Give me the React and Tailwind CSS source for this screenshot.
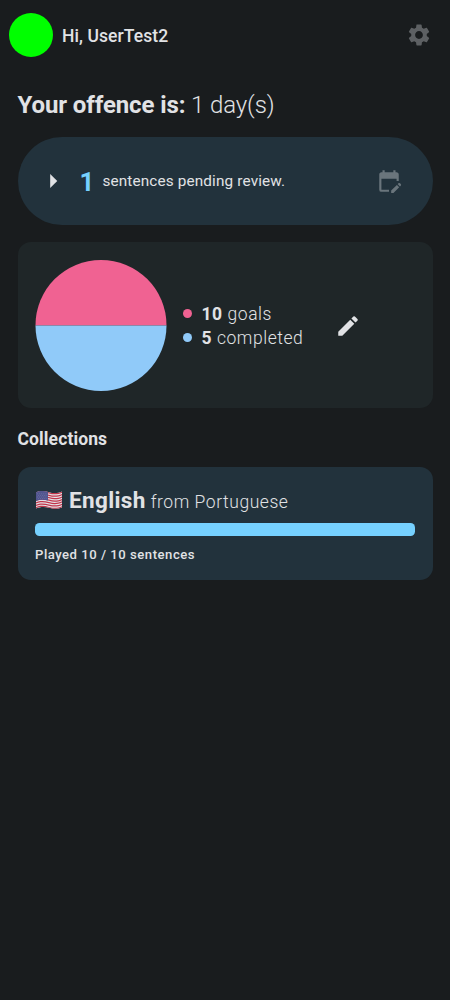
import { MdSettings, MdArrowRight, MdEditCalendar, MdEdit } from "react-icons/md";

const stripes = [0, 1, 2, 3, 4, 5, 6];

function Flag() {
  return (
    <svg viewBox="0 0 26 18" className="h-[18px] w-[26px]" aria-label="United States">
      <defs>
        <clipPath id="wave">
          <path d="M0 1.5C4-.5 8-.2 13 1.2S22 2.2 26 .5V16.5C22 18.2 18 18.2 13 16.8S4 16 0 17.5Z" />
        </clipPath>
      </defs>
      <g clipPath="url(#wave)">
        <path d="M0 0H26V18H0Z" fill="#e4e2e6" />
        {stripes.map((i) => (
          <path
            key={i}
            transform={`translate(0 ${i * 2.46})`}
            d="M0 1.5C4-.5 8-.2 13 1.2S22 2.2 26 .5V1.75C22 3.45 18 3.85 13 2.45S4 .75 0 2.75Z"
            fill="#c2344a"
          />
        ))}
        <path d="M0 0H12V9.6C8 8.4 4 8.1 0 10Z" fill="#51558f" />
        <path d="M1.2 2.8H11M2.2 4.4H11M1.2 6H11M2.2 7.6H11" stroke="#8587b4" strokeWidth=".6" strokeDasharray=".7 1.2" />
      </g>
    </svg>
  );
}

function Legend({ dot, value, label }) {
  return (
    <div className="flex h-6 items-center">
      <span className={`mr-[9.5px] size-[9px] shrink-0 -translate-y-px rounded-full ${dot}`} />
      <p className="whitespace-nowrap text-[17.5px] font-light tracking-[0.55px]">
        <b className="font-bold">{value}</b> {label}
      </p>
    </div>
  );
}

export default function App() {
  return (
    <div className="flex min-h-screen flex-col bg-[#191c1e] font-['Roboto',sans-serif] text-[#e1e2e5]">
      <header className="flex h-[70px] items-center justify-between pl-[9px] pr-[18px]">
        <div className="flex items-center gap-[9px]">
          <span className="size-11 rounded-full bg-[#00ff00]" />
          <span className="pt-[2px] text-[17.5px] font-medium tracking-[0.08px]">Hi, UserTest2</span>
        </div>
        <MdSettings className="size-[26px] text-[#5d6063]" />
      </header>

      <main className="flex flex-col px-[17.5px]">
        <h1 className="flex h-[67px] items-center whitespace-pre pt-[2px] text-[24px] font-light tracking-[-0.11px]">
          <b className="font-bold">Your offence is:</b> 1 day(s)
        </h1>

        <section className="flex h-[87.5px] items-center rounded-full bg-[#22323c] pl-[18px] pr-[31px]">
          <MdArrowRight className="size-[34px]" />
          <span className="ml-[10px] pt-[2px] text-[26px] font-bold leading-none text-[#76d1ff]">1</span>
          <span className="ml-[8px] pt-[2px] text-[15.3px] tracking-[0.15px]">sentences pending review.</span>
          <MdEditCalendar className="ml-auto size-[26px] text-[#6a757c]" />
        </section>

        <section className="mt-[17px] flex h-[166.5px] items-center rounded-[13px] bg-[#1f2628] pl-[17px]">
          <svg viewBox="0 0 132 132" className="size-[132px]">
            <path d="M0.5 66.4a65.5 65.5 0 0 1 131 0Z" fill="#f06292" />
            <path d="M0.5 66.4a65.5 65.5 0 0 0 131 0Z" fill="#90caf9" />
          </svg>
          <div className="ml-[16.5px] flex flex-col pt-[3px]">
            <Legend dot="bg-[#f06292]" value="10" label="goals" />
            <Legend dot="bg-[#90caf9]" value="5" label="completed" />
          </div>
          <MdEdit className="ml-[32px] size-[26px] translate-y-px" />
        </section>

        <h2 className="flex h-[59px] items-center pt-[3px] text-[17.5px] font-bold tracking-[0.12px]">Collections</h2>

        <section className="flex h-[113px] flex-col rounded-[13px] bg-[#22323c] px-[17.5px] pt-[17px]">
          <div className="flex h-[31px] items-baseline whitespace-nowrap">
            <span className="ml-px mr-[7px] translate-y-px"><Flag /></span>
            <span className="text-[22.5px] font-bold tracking-[0.36px]">English</span>
            <span className="ml-[5px] text-[17.5px] font-light tracking-[0.55px]">from Portuguese</span>
          </div>
          <div className="mt-[8px] h-[13px] rounded-[4.5px] bg-[#76d1ff]" />
          <p className="mt-[9px] text-[13.1px] font-medium leading-[20px] tracking-[0.52px]">Played 10 / 10 sentences</p>
        </section>
      </main>
    </div>
  );
}
